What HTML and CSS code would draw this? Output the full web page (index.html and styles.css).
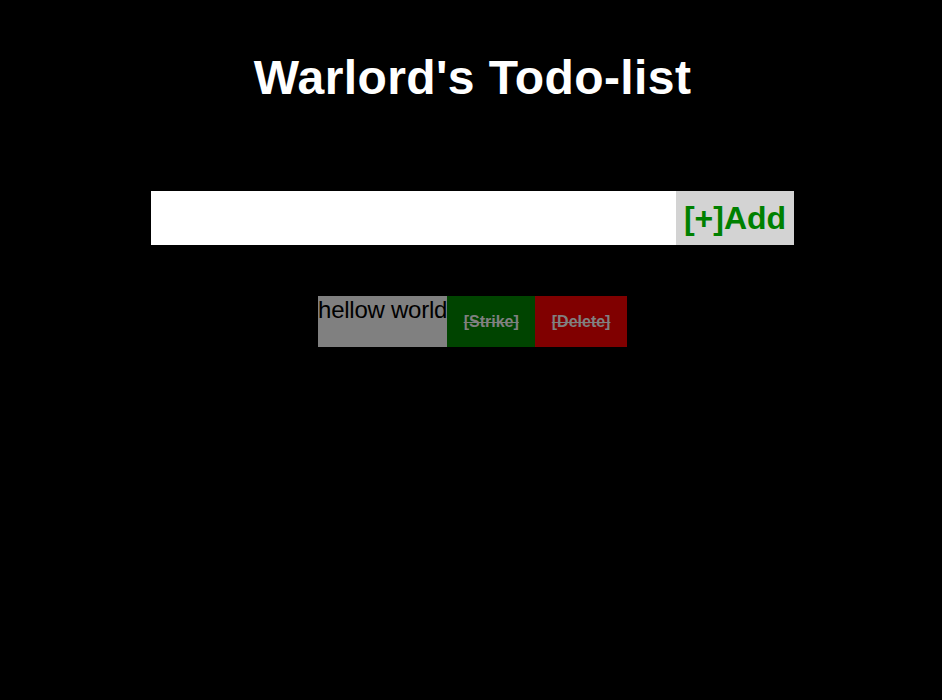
FILE: index.html
```html
<!DOCTYPE html>
<html lang="en">
<head>
<meta charset="utf-8">
<title>Warlord's Todo-list</title>
<link rel="stylesheet" href="styles.css">
</head>
<body>
<div class="app">
  <h1 class="title">Warlord's Todo-list</h1>
  <form class="add-form">
    <input class="add-input" type="text">
    <button class="add-btn" type="button">[+]Add</button>
  </form>
  <ul class="todo-list">
    <li class="todo-item">
      <span class="todo-text">hellow world</span>
      <button class="todo-btn strike-btn" type="button">[Strike]</button>
      <button class="todo-btn delete-btn" type="button">[Delete]</button>
    </li>
  </ul>
</div>
</body>
</html>
```
FILE: styles.css
```css
html, body {
  margin: 0;
  background: #000;
}
body {
  font-family: "Liberation Sans", Arial, sans-serif;
  padding-left: 3px;
}
.app {
  display: flex;
  flex-direction: column;
  align-items: center;
}
.title {
  margin: 0;
  padding-top: 50px;
  font-size: 48px;
  line-height: 55px;
  font-weight: bold;
  letter-spacing: 0.4px;
  color: #fff;
  text-align: center;
}
.add-form {
  display: flex;
  margin: 86px 0 0;
}
.add-input {
  width: 525px;
  height: 54px;
  box-sizing: border-box;
  border: none;
  background: #fff;
  margin: 0;
  padding: 0 8px;
  outline: none;
}
.add-btn {
  height: 54px;
  margin: 0;
  border: none;
  padding: 0 8px;
  background: #d3d3d3;
  color: #008000;
  font-family: "Liberation Sans", Arial, sans-serif;
  font-size: 32px;
  font-weight: bold;
}
.todo-list {
  list-style: none;
  margin: 51px 0 0;
  padding: 0;
}
.todo-item {
  display: flex;
  height: 51px;
}
.todo-text {
  background: #808080;
  color: #000;
  font-size: 24px;
  line-height: 27px;
  letter-spacing: -0.25px;
}
.todo-btn {
  margin: 0;
  border: none;
  padding: 0 16.5px;
  height: 51px;
  color: #808080;
  font-family: "Liberation Sans", Arial, sans-serif;
  font-size: 16px;
  font-weight: bold;
  text-decoration: line-through;
}
.strike-btn {
  background: #004400;
}
.delete-btn {
  background: #800000;
}
```
